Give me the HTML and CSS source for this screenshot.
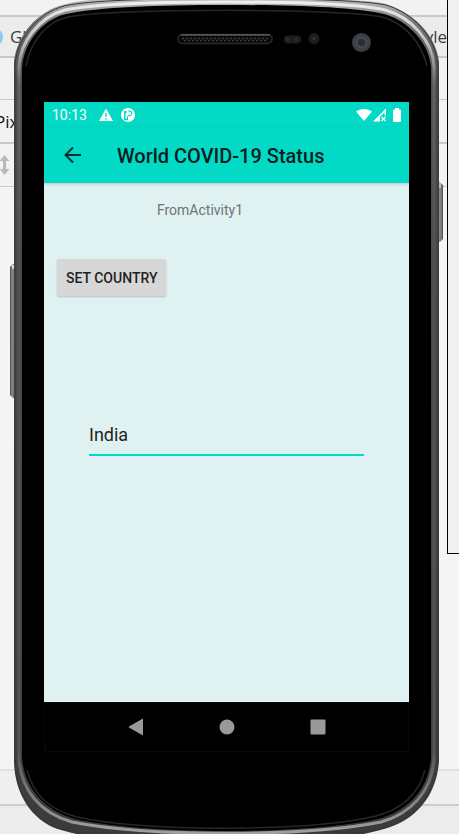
FILE: index.html
```html
<!DOCTYPE html>
<html lang="en">
<head>
<meta charset="utf-8">
<meta name="viewport" content="width=device-width, initial-scale=1">
<title>World COVID-19 Status</title>
<link rel="stylesheet" href="styles.css">
</head>
<body>
<div class="desktop">
  <div class="ide">
    <div class="strip strip-top"></div>
    <div class="strip strip-tabs"><span class="tab-dot"></span><span class="tab-name">Gl</span><span class="tab-end">yle</span></div>
    <div class="strip strip-gap"></div>
    <div class="strip strip-device"><span>Pix</span></div>
    <div class="strip strip-tools">
      <svg width="10" height="22" viewBox="0 0 10 22" aria-hidden="true"><path d="M4.500 1 9.500 7H6v8h3.500L4.500 21-.5 15H3V7H-.5z" fill="#b9b9b9"/></svg>
    </div>
    <div class="strip strip-editor"></div>
    <div class="strip strip-status"></div>
    <div class="strip strip-foot"></div>
  </div>
  <div class="side-window"></div>

  <main class="phone">
    <svg class="frame" viewBox="10 0 434 834" preserveAspectRatio="none" aria-hidden="true">
      <defs>
        <linearGradient id="metal" x1="0" y1="0" x2="0" y2="1">
          <stop offset="0" stop-color="#c9c9c9"/><stop offset=".03" stop-color="#777"/><stop offset=".1" stop-color="#4c4c4c"/><stop offset=".88" stop-color="#404040"/><stop offset="1" stop-color="#3a3a3a"/>
        </linearGradient>
        <linearGradient id="shine" x1="0" y1="0" x2="0" y2="1">
          <stop offset="0" stop-color="#eee"/><stop offset=".05" stop-color="#c0c0c0"/><stop offset=".1" stop-color="#626262"/><stop offset=".3" stop-color="#505050"/><stop offset=".9" stop-color="#545454"/><stop offset="1" stop-color="#a0a0a0"/>
        </linearGradient>
        <linearGradient id="key" x1="0" y1="0" x2="1" y2="0">
          <stop offset="0" stop-color="#444"/><stop offset=".3" stop-color="#888"/><stop offset=".7" stop-color="#777"/><stop offset="1" stop-color="#444"/>
        </linearGradient>
      </defs>
      <path d="M10 267l3-3h3v134h-3l-3-3z" fill="url(#key)"/>
      <path d="M12 265h3v4h-3z" fill="#d5d5d5"/>
      <path d="M438 181l5 4v54l-3 3h-2z" fill="url(#key)"/>
      <path d="M438 182l3 2v4h-3z" fill="#bbb"/>
      <path d="M14 62C17 35 37 12 62 5C75 1 90 0 105-1C185-5 270-5 350 0C363 1 376 1 386 4C412 12 436 34 439 62V762C436 798 414 821 384 829C365 834 350 837 335 840H115C91 837 72 834 55 828C33 819 15 796 14 762z" fill="url(#metal)"/>
      <path d="M15 64C18 37 38 13 64 6C90 0 150-1 226-2C302-1 360 0 386 5C413 13 435 36 438 64V761C435 795 414 820 384 828C330 842 115 842 57 828C34 819 16 795 15 761z" fill="none" stroke="#363636" stroke-width="1"/>
      <path d="M19 67C20 42 39 17 65 10C94 4 155 2 226 2C297 2 358 4 385 10C411 17 433 41 434 67V759C432 792 410 814 381 822C305 837 148 837 72 822C40 813 21 790 19 759z" fill="none" stroke="url(#shine)" stroke-width="3"/>
      <path d="M22 69C23 44 41 20 66 14C100 7 155 5 226 5C297 5 350 7 384 14C409 21 430 44 431 69V757C429 789 408 811 378 819C305 835 148 835 75 819C43 810 24 787 22 757z" fill="#000"/>
      <path d="M26 66C31 41 46 22 68 17C110 8 340 8 382 17C404 23 421 41 427 66M27 770C34 797 51 810 77 817C145 832 308 832 376 816C401 809 418 796 425 770" fill="none" stroke="#262626" stroke-width="1.500"/>
      <rect x="178" y="34.500" width="94" height="9" rx="4" fill="#090909" stroke="#2b2b2b" stroke-width="1.500"/>
      <path d="M181 35H270" stroke="#777"/>
      <path d="M182 38.500H269M184 40.500H268" stroke="#3c3c3c" stroke-width="1.500" stroke-dasharray="2 2"/>
      <rect x="284" y="35.500" width="17" height="8" rx="4" fill="#1e1e1e"/>
      <circle cx="288" cy="39.500" r="1.500" fill="#303030"/><circle cx="296" cy="39.500" r="1.500" fill="#303030"/>
      <circle cx="314" cy="38.500" r="5.500" fill="#1d1d1d"/><circle cx="314" cy="38.500" r="2" fill="#303030"/>
      <circle cx="361.500" cy="42.500" r="9.500" fill="#3b4046"/><circle cx="361.500" cy="42.500" r="6" fill="#424852"/><circle cx="361.500" cy="42.500" r="3.500" fill="#292e34"/>
    </svg>

    <div class="screen">
      <div class="statusbar">
        <span class="clock">10:13</span>
        <svg width="14" height="14" viewBox="0 0 14 14" aria-hidden="true"><path d="M7 .5 14 13H0z" fill="#fff"/><path d="M7 5v4M7 10v1.500" stroke="#03dac6" stroke-width="1.400"/></svg>
        <svg class="badge-icon" width="14" height="14" viewBox="0 0 14 14" aria-hidden="true"><circle cx="7" cy="7" r="7" fill="#fff"/><path d="M3 3h2.500v2H4.500v5.500H6V8h1v4H3z" fill="#03dac6"/><path d="M7 3h1.500a2.300 2.300 0 0 1 0 4.600H7" fill="none" stroke="#03dac6" stroke-width="1.200"/></svg>
        <span class="spacer"></span>
        <svg width="16" height="14" viewBox="0 0 16 14" aria-hidden="true"><path d="M0 3.500C4.500 0 11.500 0 16 3.500L8 13z" fill="#fff"/></svg>
        <svg class="signal" width="14" height="14" viewBox="0 0 14 14" aria-hidden="true"><path d="M13 .5v7h-1.500V4.500L7 8.500v5H0z" fill="#fff"/><path d="M8.500 9l4 4M12.500 9l-4 4" stroke="#fff" stroke-width="1.400"/></svg>
        <svg class="battery" width="8" height="14" viewBox="0 0 8 14" aria-hidden="true"><path d="M2 0h4v1.500h1Q8 1.500 8 2.500V13Q8 14 7 14H1Q0 14 0 13V2.500Q0 1.500 1 1.500h1z" fill="#fff"/></svg>
      </div>
      <header class="appbar">
        <button class="back" type="button" aria-label="Back"><svg width="18" height="18" viewBox="0 0 18 18"><path d="M17 9H2M9 1.500 1.500 9 9 16.500" fill="none" stroke="#06302c" stroke-width="2"/></svg></button>
        <h1>World COVID-19 Status</h1>
      </header>
      <section class="content">
        <p class="source">FromActivity1</p>
        <button class="set-country" type="button">SET COUNTRY</button>
        <input class="country" type="text" value="India" aria-label="Country">
      </section>
      <nav class="navbar">
        <button type="button" aria-label="Back"><svg width="16" height="18" viewBox="0 0 16 18"><path d="M14 1Q15 .5 15 1.500v15Q15 17.500 14 17L1 9.500Q.3 9 1 8.500z" fill="#999"/></svg></button>
        <button type="button" aria-label="Home"><svg width="16" height="16" viewBox="0 0 16 16"><circle cx="8" cy="8" r="7.500" fill="#999"/></svg></button>
        <button type="button" aria-label="Overview"><svg width="16" height="16" viewBox="0 0 16 16"><rect width="15" height="15" x=".5" y=".5" rx="1" fill="#999"/></svg></button>
      </nav>
    </div>
  </main>
</div>
</body>
</html>
```
FILE: styles.css
```css
* { box-sizing: border-box; }

body {
  margin: 0;
  font-family: Roboto, sans-serif;
  background: #f4f4f4;
}

button, input {
  font: inherit;
  border: 0;
  padding: 0;
  background: none;
}

svg { display: block; flex: none; }

.desktop {
  display: grid;
  min-height: 100vh;
  overflow: hidden;
}

.ide, .side-window, .phone { grid-area: 1 / 1; }

.ide {
  display: flex;
  flex-direction: column;
  overflow: hidden;
  font-family: "Open Sans", sans-serif;
  font-size: 17px;
  color: #3c3c3c;
}

.strip {
  display: flex;
  align-items: center;
  border-bottom: 2px solid #c9c9c9;
  background: #f2f2f2;
}

.strip-top { height: 17px; }
.strip-tabs { height: 41px; padding-right: 12px; background: #ececec; }
.tab-dot { width: 9px; height: 14px; margin-left: -6px; border-radius: 50%; background: #87ceeb; }
.tab-name { margin-left: 7px; }
.tab-end { margin-left: auto; }
.strip-gap { height: 42px; border-bottom-width: 1px; }
.strip-device { height: 44px; color: #111; }
.strip-device span { margin-left: -5px; }
.strip-tools { height: 43px; border-bottom-width: 1px; }
.strip-editor { flex: 1; background: #f4f4f4; border-color: #e2e2e2; }
.strip-status { height: 35px; background: #efefef; border-color: #cdcdcd; }
.strip-foot { height: 28px; background: #ececec; border: 0; }

.side-window {
  justify-self: end;
  align-self: start;
  width: 12px;
  height: 554px;
  border: solid #000;
  border-width: 0 0 1px 1px;
  background: #f0f0f0;
}

.phone {
  position: relative;
  display: flex;
  margin: 0 15px 0 10px;
  padding: 102px 35px 82px 34px;
}

.frame {
  position: absolute;
  inset: 0;
  width: 100%;
  height: 100%;
}

.screen {
  position: relative;
  flex: 1;
  min-width: 0;
  display: flex;
  flex-direction: column;
  background: #e0f1f1;
}

.statusbar {
  display: flex;
  align-items: center;
  height: 25px;
  padding: 0 8px;
  background: #03dac6;
  color: #fff;
  font-size: 14px;
}

.clock { margin-right: 12px; }
.badge-icon { margin-left: 8px; }
.spacer { flex: 1; }
.signal { margin-left: 1px; }
.battery { margin-left: 6px; }

.appbar {
  display: flex;
  align-items: center;
  height: 56px;
  padding: 0 20px;
  gap: 35px;
  background: #03dac6;
  box-shadow: 0 1px 3px rgba(0, 0, 0, .2);
}

.appbar h1 {
  margin: 0;
  padding-top: 2px;
  font-size: 20px;
  font-weight: 500;
  white-space: nowrap;
  color: #06211e;
}

.content {
  flex: 1;
  display: flex;
  flex-direction: column;
  align-items: flex-start;
}

.source {
  align-self: center;
  margin: 18px 53px 0 0;
  font-size: 14px;
  line-height: 18px;
  color: #6d7575;
}

.set-country {
  height: 37px;
  margin: 40px 13px 0;
  padding: 0 9px;
  border-radius: 2px;
  background: #d6d7d7;
  box-shadow: 0 1px 2px rgba(0, 0, 0, .2);
  font-size: 14px;
  font-weight: 500;
  color: #1f1f1f;
}

.country {
  align-self: stretch;
  width: auto;
  height: 42px;
  margin: 118px 45px 0;
  border-bottom: 2px solid #03dac6;
  font-size: 18px;
  color: #1c2424;
  outline: 0;
}

.navbar {
  display: flex;
  align-items: center;
  justify-content: center;
  gap: 75px;
  height: 50px;
  padding-bottom: 1px;
  border: 1px solid #040c0b;
  background: #000;
}
```
